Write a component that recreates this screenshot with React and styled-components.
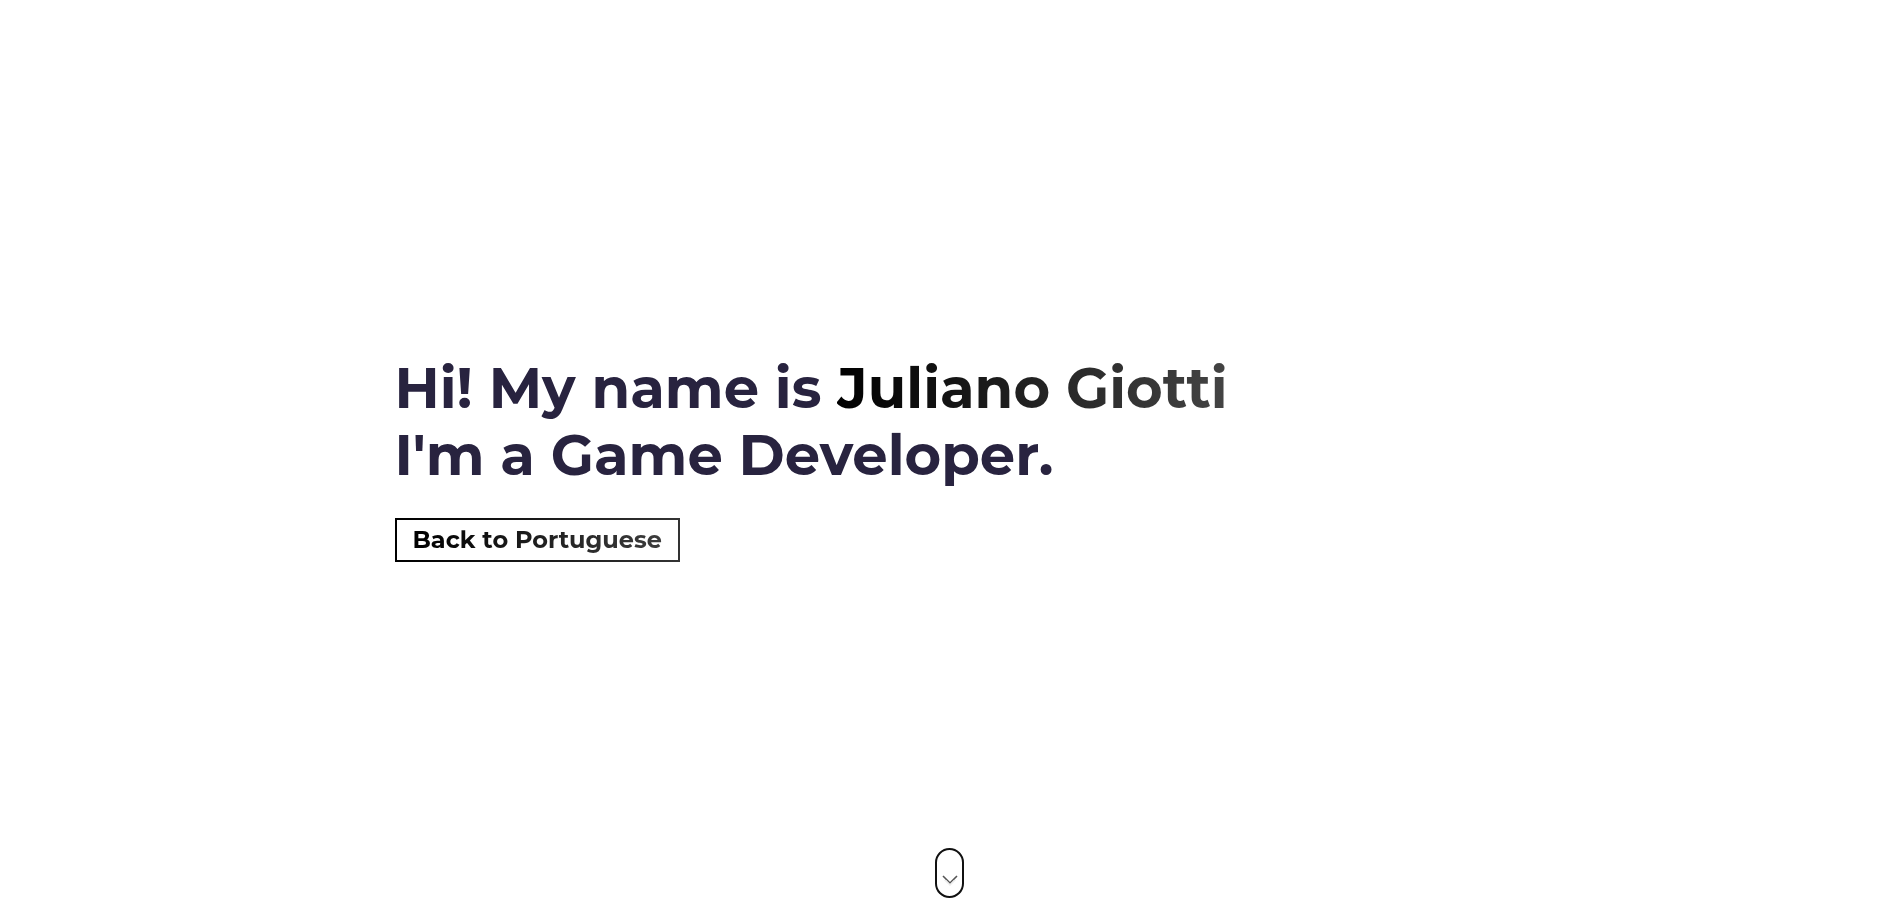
import styled, { createGlobalStyle } from 'styled-components';

const GlobalStyle = createGlobalStyle`
  html, body {
    margin: 0;
    padding: 0;
    background: #fff;
  }
  body {
    font-family: 'Montserrat', 'Inter', 'Noto Sans', sans-serif;
  }
`;

const Hero = styled.section`
  height: 100vh;
  display: grid;
  grid-template-rows: 1fr auto 1fr;
`;

const Container = styled.div`
  grid-row: 2;
  width: 1140px;
  margin: 0 auto;
  padding: 0 15px;
  box-sizing: border-box;
`;

const Title = styled.h1`
  margin: 0 0 29px;
  font-size: 56px;
  line-height: 67px;
  font-weight: 700;
  color: #28233f;
`;

const Name = styled.span`
  background: linear-gradient(90deg, #000 0%, #444 100%);
  -webkit-background-clip: text;
  background-clip: text;
  color: transparent;
`;

const LangButton = styled.button`
  font-family: inherit;
  font-size: 24px;
  font-weight: 700;
  padding: 0 16px;
  height: 44px;
  background: #fff;
  border: 2px solid;
  border-image: linear-gradient(90deg, #000, #333) 1;
  cursor: pointer;

  span {
    background: linear-gradient(90deg, #000 0%, #3c3c3c 100%);
    -webkit-background-clip: text;
    background-clip: text;
    color: transparent;
  }
`;

const Bottom = styled.div`
  grid-row: 3;
  display: flex;
  justify-content: center;
  align-items: flex-end;
  padding-bottom: 18px;
`;

const Mouse = styled.div`
  width: 29px;
  height: 50px;
  border: 2px solid #111;
  border-radius: 15px;
  display: flex;
  flex-direction: column;
  align-items: center;
  justify-content: flex-end;
  padding-bottom: 10px;
  box-sizing: border-box;
`;

const Chevron = styled.svg`
  display: block;
  margin-top: ${p => p.$offset || 0}px;
`;

export default function App() {
  return (
    <>
      <GlobalStyle />
      <Hero>
        <Container>
          <Title>
            Hi! My name is <Name>Juliano Giotti</Name>
            <br />
            I'm a Game Developer.
          </Title>
          <LangButton>
            <span>Back to Portuguese</span>
          </LangButton>
        </Container>
        <Bottom>
          <Mouse>
            <Chevron width="16" height="9" viewBox="0 0 16 9">
              <path d="M1 1l7 7 7-7" fill="none" stroke="#555" strokeWidth="1.6" />
            </Chevron>
            <Chevron width="16" height="6" viewBox="0 3 16 6" $offset={-4}>
              <path d="M1 1l7 7 7-7" fill="none" stroke="#eee" strokeWidth="1.6" />
            </Chevron>
          </Mouse>
        </Bottom>
      </Hero>
    </>
  );
}
